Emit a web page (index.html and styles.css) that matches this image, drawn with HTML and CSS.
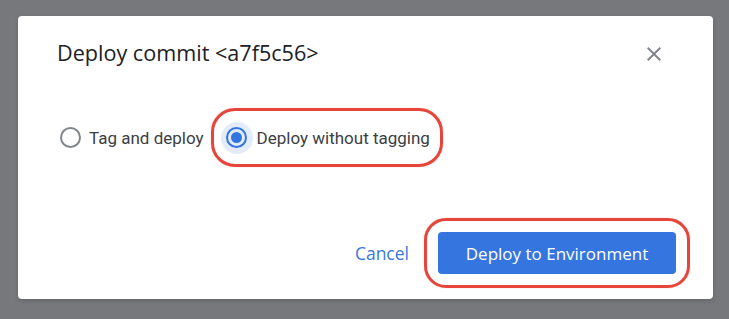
FILE: index.html
```html
<!DOCTYPE html>
<html>
<head>
<meta charset="utf-8">
<link rel="stylesheet" href="styles.css">
</head>
<body>
<div class="dialog">
  <div class="header">
    <h1 class="title">Deploy commit &lt;a7f5c56&gt;</h1>
    <svg class="close" width="24" height="24" viewBox="0 0 24 24"><path d="M19 6.41L17.59 5 12 10.59 6.41 5 5 6.41 10.59 12 5 17.59 6.41 19 12 13.41 17.59 19 19 17.59 13.41 12z" fill="#80868b"/></svg>
  </div>
  <div class="options">
    <label class="option">
      <span class="radio"></span>
      <span class="label">Tag and deploy</span>
    </label>
    <label class="option highlight selected">
      <span class="halo"><span class="radio checked"></span></span>
      <span class="label">Deploy without tagging</span>
    </label>
  </div>
  <div class="actions">
    <span class="cancel">Cancel</span>
    <div class="btn-highlight">
      <button class="primary">Deploy to Environment</button>
    </div>
  </div>
</div>
</body>
</html>
```

FILE: styles.css
```css
html, body {
  margin: 0;
  padding: 0;
  background: #76787b;
  width: 729px;
  height: 319px;
  overflow: hidden;
}
.dialog {
  box-sizing: border-box;
  margin: 16px 0 0 18px;
  width: 695px;
  height: 283px;
  background: #fff;
  border-radius: 4px;
  box-shadow: 0 2px 4px rgba(0,0,0,0.15);
  display: flex;
  flex-direction: column;
  font-family: Roboto, "Liberation Sans", sans-serif;
}
.header {
  display: flex;
  align-items: center;
  justify-content: space-between;
  padding: 23px 47px 0 39px;
  height: 28px;
}
.title {
  margin: 0;
  font-family: "Open Sans", Roboto, sans-serif;
  font-weight: 500;
  font-size: 21.6px;
  line-height: 28px;
  color: #202124;
}
.close {
  display: block;
  margin-top: 2px;
}
.options {
  display: flex;
  align-items: center;
  margin-top: 41px;
  padding-left: 42px;
  gap: 7px;
}
.option {
  display: flex;
  align-items: center;
  gap: 8px;
  height: 59px;
  box-sizing: border-box;
  font-size: 17px;
  color: #3c4043;
}
.highlight {
  border: 3px solid #e6453a;
  border-radius: 24px;
  padding: 0 10px 0 7px;
  gap: 4px;
  box-shadow: 0 0 1px rgba(230,69,58,0.6);
}
.radio {
  box-sizing: border-box;
  width: 21px;
  height: 21px;
  border: 2px solid #80868b;
  border-radius: 50%;
  display: flex;
  align-items: center;
  justify-content: center;
}
.halo {
  width: 32px;
  height: 32px;
  border-radius: 50%;
  background: #e3ecfb;
  display: flex;
  align-items: center;
  justify-content: center;
}
.radio.checked {
  border-color: #3474e0;
}
.radio.checked::after {
  content: "";
  width: 11px;
  height: 11px;
  border-radius: 50%;
  background: #3474e0;
}
.actions {
  margin-top: auto;
  margin-bottom: 11px;
  margin-right: 23px;
  display: flex;
  align-items: center;
  justify-content: flex-end;
  gap: 15px;
}
.cancel {
  font-family: "Open Sans", Roboto, sans-serif;
  font-size: 17.5px;
  font-weight: 500;
  color: #3a78e0;
}
.btn-highlight {
  border: 3px solid #e6453a;
  border-radius: 22px;
  padding: 11px;
  box-shadow: 0 0 1px rgba(230,69,58,0.6);
}
.primary {
  display: block;
  width: 238px;
  height: 42px;
  border: none;
  border-radius: 4px;
  background: #3475e0;
  color: #fff;
  font-family: "Open Sans", Roboto, sans-serif;
  font-size: 17px;
  font-weight: 500;
  padding: 0;
}
```
